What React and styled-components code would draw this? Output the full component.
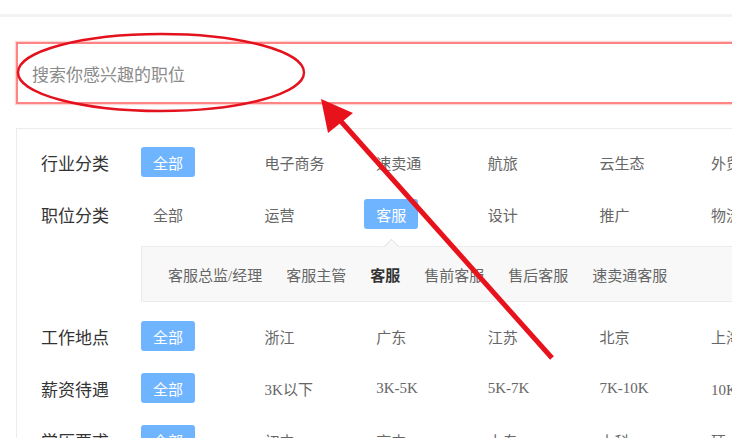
import React from "react";
import styled, { createGlobalStyle } from "styled-components";

const Global = createGlobalStyle`
  html, body { margin: 0; padding: 0; background: #fff; overflow: hidden; }
  body {
    font-family: "Liberation Serif", "Noto Sans CJK SC", serif;
    width: 732px; height: 438px;
  }
`;

const Page = styled.div`
  position: relative;
  width: 820px;
  height: 438px;
  overflow: hidden;
`;

const Header = styled.div`
  height: 14px;
  border-bottom: 3px solid #f3f3f3;
`;

const SearchBox = styled.div`
  margin: 25px 0 0 16px;
  height: 62px;
  box-sizing: border-box;
  border: 2px solid #ff8484;
  box-shadow: 0 0 1px 1px #ffd6d6;
  display: flex;
  align-items: center;
  padding-left: 14px;
  font-size: 17px;
  color: #8a8a8a;
`;

const Card = styled.div`
  margin: 24px 0 0 16px;
  border-top: 1px solid #ececec;
  border-left: 1px solid #ececec;
  padding-top: 7px;
`;

const Row = styled.div`
  display: flex;
  align-items: center;
  height: 52px;
  padding-left: 24px;
`;

const Label = styled.div`
  flex: 0 0 100px;
  font-size: 17px;
  color: #333;
  white-space: nowrap;
`;

const Options = styled.div`
  display: flex;
  align-items: center;
`;

const Cell = styled.div`
  flex: 0 0 111.6px;
  display: flex;
  align-items: center;
`;

const Option = styled.span`
  position: relative;
  display: inline-flex;
  align-items: center;
  height: 30px;
  padding: 0 12px;
  border-radius: 3px;
  font-size: 15px;
  white-space: nowrap;
  color: ${(p) => (p.$active ? "#fff" : "#666")};
  background: ${(p) => (p.$active ? "#6fb4ff" : "transparent")};
`;

const SubPanel = styled.div`
  position: relative;
  margin: 6px 0 8px 124px;
  height: 56px;
  box-sizing: border-box;
  background: #f8f8f8;
  border: 1px solid #ececec;
  border-right: none;
  display: flex;
  align-items: center;
  padding-left: 14px;
`;

const Notch = styled.span`
  position: absolute;
  top: -6px;
  left: ${(p) => p.$x}px;
  width: 10px;
  height: 10px;
  background: #f8f8f8;
  border-left: 1px solid #e6e6e6;
  border-top: 1px solid #e6e6e6;
  transform: rotate(45deg);
`;

const SubItem = styled.span`
  padding: 0 12px;
  font-size: 15px;
  white-space: nowrap;
  color: ${(p) => (p.$active ? "#333" : "#666")};
  font-weight: ${(p) => (p.$active ? 700 : 400)};
`;

const Overlay = styled.svg`
  position: absolute;
  left: 0;
  top: 0;
  pointer-events: none;
`;

const rows = [
  { label: "行业分类", active: 0, items: ["全部", "电子商务", "速卖通", "航旅", "云生态", "外贸"] },
  { label: "职位分类", active: 2, items: ["全部", "运营", "客服", "设计", "推广", "物流"], sub: true },
  { label: "工作地点", active: 0, items: ["全部", "浙江", "广东", "江苏", "北京", "上海"] },
  { label: "薪资待遇", active: 0, items: ["全部", "3K以下", "3K-5K", "5K-7K", "7K-10K", "10K以上"] },
  { label: "学历要求", active: 0, items: ["全部", "初中", "高中", "大专", "本科", "硕士"] },
];

const subItems = ["客服总监/经理", "客服主管", "客服", "售前客服", "售后客服", "速卖通客服"];

export default function App() {
  return (
    <Page>
      <Global />
      <Header />
      <SearchBox>搜索你感兴趣的职位</SearchBox>
      <Card>
        {rows.map((r) => (
          <React.Fragment key={r.label}>
            <Row>
              <Label>{r.label}</Label>
              <Options>
                {r.items.map((it, i) => (
                  <Cell key={it}>
                    <Option $active={i === r.active}>{it}</Option>
                  </Cell>
                ))}
              </Options>
            </Row>
            {r.sub && (
              <SubPanel>
                <Notch $x={244} />
                {subItems.map((s) => (
                  <SubItem key={s} $active={s === "客服"}>{s}</SubItem>
                ))}
              </SubPanel>
            )}
          </React.Fragment>
        ))}
      </Card>
      <Overlay width="732" height="438" viewBox="0 0 732 438">
        <ellipse cx="161" cy="72.5" rx="143" ry="38.5" fill="none" stroke="#e3121d" strokeWidth="2.4" />
        <line x1="552" y1="358" x2="338" y2="118" stroke="#e8121c" strokeWidth="5" />
        <polygon points="321,99 353,113 328,133" fill="#e8121c" />
      </Overlay>
    </Page>
  );
}
